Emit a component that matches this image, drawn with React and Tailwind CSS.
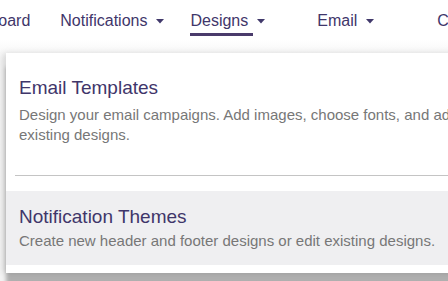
import React from "react";

const navItems = [
  { label: "Dashboard", caret: false, className: "ml-[-48px]" },
  { label: "Notifications", caret: true, className: "ml-[30px]" },
  { label: "Designs", caret: true, active: true, className: "ml-[26px]" },
  { label: "Email", caret: true, className: "ml-[52px]" },
  { label: "Contacts", caret: false, className: "ml-[63px]" },
];

const Caret = () => (
  <svg width="8" height="5" viewBox="0 0 8 5" className="ml-[9px] mt-[1px]">
    <path d="M0 0 L8 0 L4 4.5 Z" fill="#41396b" />
  </svg>
);

const App = () => {
  return (
    <div className="w-[448px] h-[281px] overflow-hidden font-['Liberation_Sans',Arial,sans-serif] bg-gradient-to-b from-white from-[14%] to-[#f3f3f3] to-[22%]">
      {/* Top navigation */}
      <nav className="flex items-start h-[53px] pt-[10px] whitespace-nowrap">
        {navItems.map((item) => (
          <div key={item.label} className={`flex flex-col shrink-0 ${item.className}`}>
            <div className="flex items-center h-[22px] text-[16px] text-[#3f366a]">
              {item.label}
              {item.caret && <Caret />}
            </div>
            {item.active && <div className="h-[3px] w-[63px] mt-[1px] bg-[#4a3b6b]" />}
          </div>
        ))}
      </nav>

      {/* Dropdown panel */}
      <div className="ml-[6px] w-[520px] bg-white shadow-[0_14px_4px_rgba(0,0,0,0.28),-3px_0_6px_rgba(0,0,0,0.12)] pt-[23px] pb-[8px]">
        <div className="px-[13px]">
          <div className="text-[19px] leading-[24px] text-[#3f366a]">Email Templates</div>
          <p className="mt-[5px] text-[15px] leading-[20px] text-[#777777] w-[470px]">
            Design your email campaigns. Add images, choose fonts, and adjust existing designs.
          </p>
        </div>
        <div className="ml-[9px] mt-[30px] h-px bg-[#c4c4c4]" />
        <div className="mt-[15px] bg-[#efeff1] px-[13px] pt-[14px] pb-[14px]">
          <div className="text-[19px] leading-[24px] text-[#3f366a]">Notification Themes</div>
          <p className="mt-[2px] text-[15px] leading-[20px] text-[#777777]">
            Create new header and footer designs or edit existing designs.
          </p>
        </div>
      </div>
    </div>
  );
};

export default App;
